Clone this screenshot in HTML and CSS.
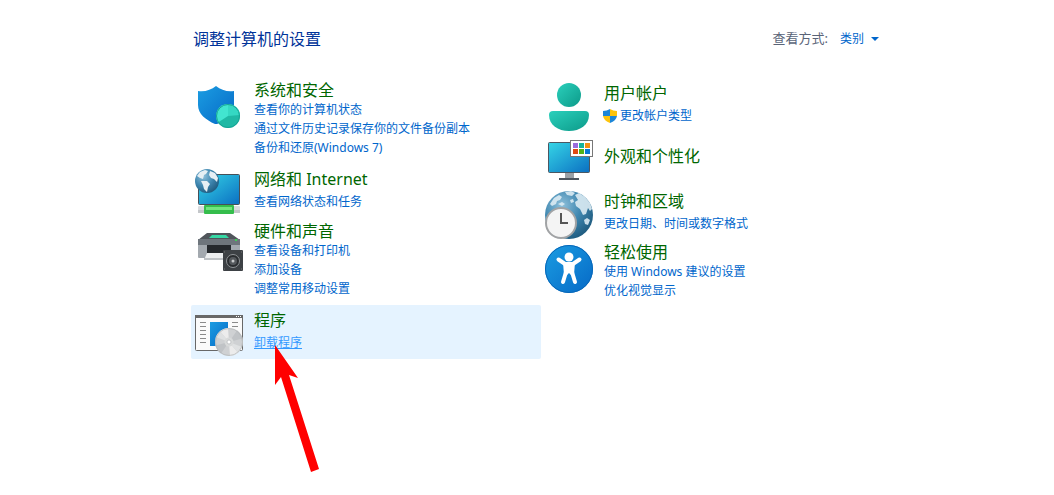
FILE: index.html
```html
<!DOCTYPE html>
<html lang="zh-CN">
<head>
    <meta charset="UTF-8">
    <meta name="viewport" content="width=device-width, initial-scale=1.0">
    <title>控制面板</title>
    <link rel="stylesheet" href="styles.css">
</head>
<body>
    <main class="panel">
        <header class="panel-header">
            <h1>调整计算机的设置</h1>
            <div class="view-by">
                <label for="view">查看方式:</label>
                <select id="view"><option>类别</option></select>
                <svg class="caret" viewBox="0 0 8 4"><path d="M0 0H8L4 4Z" fill="#0066cc"/></svg>
            </div>
        </header>

        <div class="columns">
            <div class="column column-left">
                <section class="category tall">
                    <svg class="icon" viewBox="0 0 48 48">
                        <defs>
                            <linearGradient id="blue" x1="0" y1="0" x2="1" y2="1"><stop offset="0" stop-color="#1b9de2"/><stop offset="1" stop-color="#0669c6"/></linearGradient>
                            <linearGradient id="screen" x1="0" y1="0" x2="1" y2="1"><stop offset="0" stop-color="#35d5e6"/><stop offset="1" stop-color="#0b6fc2"/></linearGradient>
                            <linearGradient id="teal" x1="0" y1="0" x2="1" y2="1"><stop offset="0" stop-color="#2bd0bc"/><stop offset="1" stop-color="#0c9a89"/></linearGradient>
                            <radialGradient id="globe" cx=".35" cy=".3" r=".8"><stop offset="0" stop-color="#8fc0da"/><stop offset=".5" stop-color="#3f87b0"/><stop offset="1" stop-color="#1b5578"/></radialGradient>
                        </defs>
                        <path d="M21 3C26 7 32 9 39 8V22C39 31 31 38 22 41H20C11 37 3 31 3 22V8C10 9 16 7 21 3Z" fill="url(#blue)"/>
                        <circle cx="33" cy="33" r="12" fill="#20b9a5"/>
                        <path d="M33 33L23 39.500A12 12 0 0 1 33 21Z" fill="#42e5d0"/>
                        <path d="M33 33V21A12 12 0 0 1 45 32Z" fill="#35d8c3"/>
                        <circle cx="33" cy="33" r="11.500" fill="none" stroke="#16a394"/>
                    </svg>
                    <div class="info">
                        <h2><a href="#">系统和安全</a></h2>
                        <a href="#">查看你的计算机状态</a>
                        <a href="#">通过文件历史记录保存你的文件备份副本</a>
                        <a href="#">备份和还原(Windows 7)</a>
                    </div>
                </section>

                <section class="category">
                    <svg class="icon" viewBox="0 0 48 48">
                        <rect x="3.500" y="7.500" width="41" height="30" rx="1" fill="url(#screen)" stroke="#465058"/>
                        <rect x="3" y="39" width="42" height="7" rx="1" fill="#d9dbde"/>
                        <path d="M3 43H45V46H3Z" fill="#c4c7ca"/>
                        <rect x="9" y="38" width="30" height="9" rx="1" fill="#35bd4c"/>
                        <path d="M11 40H37V43H11Z" fill="#72e580"/>
                        <circle cx="12" cy="14" r="12" fill="url(#globe)"/>
                        <path d="M2 9L5 5 10 3 13 4 11 7 9 8 8 12 5 11ZM6 14L12 14 15 17 13 20 12 25 9 22 8 18ZM15 4L20 6 23 11 22 15 19 12 16 11 14 8Z" fill="#e6eff4"/>
                    </svg>
                    <div class="info">
                        <h2><a href="#">网络和 Internet</a></h2>
                        <a href="#">查看网络状态和任务</a>
                    </div>
                </section>

                <section class="category tall">
                    <svg class="icon" viewBox="0 0 48 48">
                        <path d="M12 9H35L45 16V19H3V16Z" fill="#50555b"/>
                        <path d="M17 11H31L34 14H14Z" fill="#36d8a4"/>
                        <rect x="3" y="15" width="42" height="19" rx="1" fill="#a3a9af"/>
                        <rect x="3" y="15" width="42" height="6" fill="#6e757c"/>
                        <circle cx="41" cy="16" r="1" fill="#32f04b"/>
                        <path d="M12 21H36V29H12Z" fill="#25292d"/>
                        <path d="M12 29H36L34 36H9Z" fill="#eceeef"/>
                        <path d="M9 34H34V36H9Z" fill="#bfc3c6"/>
                        <rect x="28" y="26" width="20" height="21" rx="1" fill="#3d4145"/>
                        <circle cx="38" cy="37" r="6.500" fill="#2a2d30" stroke="#8f9396"/>
                        <circle cx="38" cy="37" r="4" fill="#55595d"/>
                        <circle cx="38" cy="37" r="1.500" fill="#c8cacb"/>
                        <path d="M29 28H30M46 28H47M29 45H30M46 45H47" stroke="#777"/>
                    </svg>
                    <div class="info">
                        <h2><a href="#">硬件和声音</a></h2>
                        <a href="#">查看设备和打印机</a>
                        <a href="#">添加设备</a>
                        <a href="#">调整常用移动设置</a>
                    </div>
                </section>

                <section class="category selected">
                    <svg class="icon" viewBox="0 0 48 48">
                        <rect x=".500" y="7.500" width="47" height="35" rx="1" fill="#fafafa" stroke="#686868"/>
                        <path d="M0 7H48V10H0Z" fill="#686868"/>
                        <path d="M41 8.500H42M43 8.500H44M45 8.500H46" stroke="#fff"/>
                        <path d="M5 14.500H11M5 18.500H11M5 22.500H11M5 26.500H11M5 30.500H11M5 34.500H11M37 14.500H43M37 18.500H43" stroke="#8a8a8a"/>
                        <rect x="15" y="14" width="18" height="24" fill="url(#blue)"/>
                        <circle cx="34" cy="34" r="14" fill="#cfd1d3"/>
                        <path d="M34 34L25 23.300A14 14 0 0 1 33 20ZM34 34L43 44.700A14 14 0 0 1 35 48Z" fill="#ececec"/>
                        <path d="M34 34L21 29A14 14 0 0 1 25 23.300ZM34 34L47 39A14 14 0 0 1 43 44.700Z" fill="#dfe1e2"/>
                        <path d="M34 34L42 22.500A14 14 0 0 1 47.500 30.500ZM34 34L26 45.500A14 14 0 0 1 20.500 37.500Z" fill="#c0c3c6"/>
                        <circle cx="34" cy="34" r="13.500" fill="none" stroke="#b4b7b9" stroke-width=".700"/>
                        <circle cx="34" cy="34" r="4.500" fill="#d8dada"/>
                        <circle cx="34" cy="34" r="2" fill="#fff" stroke="#b5b8ba" stroke-width=".700"/>
                    </svg>
                    <div class="info">
                        <h2><a href="#">程序</a></h2>
                        <a class="hovered" href="#">卸载程序</a>
                    </div>
                    <svg class="pointer" viewBox="0 0 44 127"><path d="M0 0L23 33 14 30 44 124 36 127 6 32 0 40Z" fill="#ff0000"/></svg>
                </section>
            </div>

            <div class="column">
                <section class="category">
                    <svg class="icon" viewBox="0 0 48 48">
                        <circle cx="24" cy="12" r="12" fill="url(#teal)"/>
                        <path d="M8 28H40Q44 28 44 32C44 42 35 48 24 48S4 42 4 32Q4 28 8 28Z" fill="url(#teal)"/>
                    </svg>
                    <div class="info">
                        <h2><a href="#">用户帐户</a></h2>
                        <a class="with-shield" href="#"><svg class="shield" viewBox="0 0 14 14"><path d="M7 0Q10 2 14 2V7H7Z" fill="#fdc40c"/><path d="M7 0Q4 2 0 2V7H7Z" fill="#1c86d8"/><path d="M0 7Q1 12 7 14V7Z" fill="#fdc40c"/><path d="M14 7Q13 12 7 14V7Z" fill="#1c86d8"/></svg>更改帐户类型</a>
                    </div>
                </section>

                <section class="category single">
                    <svg class="icon" viewBox="0 0 48 48">
                        <rect x="20" y="36" width="9" height="6" fill="#9aa1a7"/>
                        <rect x="14" y="41" width="20" height="2" fill="#4c555e"/>
                        <rect x="3.500" y="5.500" width="41" height="30" rx="1" fill="url(#screen)" stroke="#4b5762"/>
                        <rect x="25.500" y="3.500" width="22" height="16" fill="#fff" stroke="#777"/>
                        <path d="M28 6H33V11H28Z" fill="#9a6bdb"/><path d="M34 6H39V11H34Z" fill="#18b39b"/><path d="M40 6H45V11H40Z" fill="#f59012"/>
                        <path d="M28 12H33V17H28Z" fill="#e04a13"/><path d="M34 12H39V17H34Z" fill="#51b318"/><path d="M40 12H45V17H40Z" fill="#0878d4"/>
                    </svg>
                    <div class="info">
                        <h2><a href="#">外观和个性化</a></h2>
                    </div>
                </section>

                <section class="category">
                    <svg class="icon" viewBox="0 0 48 48">
                        <circle cx="24" cy="24" r="24" fill="url(#globe)"/>
                        <path d="M5 13L9 7 14 4 17 6 15 9 12 10 11 13 7 15ZM13 13L17 11 20 13 17 15ZM20 1L26 0 30 2 27 5 22 4ZM30 4L34 2 40 6 45 12 47 18 45 20 43 17 41 23 38 24 35 18 31 15 30 11 33 9ZM25 9L28 8 29 11 26 12ZM39 29L42 27 45 29 43 34 40 33Z" fill="#dcebf3" opacity=".9"/>
                        <circle cx="16" cy="32" r="15" fill="#f4f4f4" stroke="#a1a3a5" stroke-width="2"/>
                        <path d="M16 22V32H23" fill="none" stroke="#555" stroke-width="2"/>
                    </svg>
                    <div class="info">
                        <h2><a href="#">时钟和区域</a></h2>
                        <a href="#">更改日期、时间或数字格式</a>
                    </div>
                </section>

                <section class="category tall">
                    <svg class="icon" viewBox="0 0 48 48">
                        <circle cx="24" cy="24" r="24" fill="url(#blue)"/>
                        <circle cx="24" cy="24" r="23.500" fill="none" stroke="#0867b8"/>
                        <circle cx="24" cy="12" r="4.500" fill="#fff"/>
                        <path d="M13.500 14.500L20 19H28L34.500 14.500M18 37L21 27M30 37L27 27" fill="none" stroke="#fff" stroke-width="4" stroke-linecap="round"/>
                        <path d="M18 17H30L29 30H26L24 28 22 30H19Z" fill="#fff"/>
                    </svg>
                    <div class="info">
                        <h2><a href="#">轻松使用</a></h2>
                        <a href="#">使用 Windows 建议的设置</a>
                        <a href="#">优化视觉显示</a>
                    </div>
                </section>
            </div>
        </div>
    </main>
</body>
</html>
```

FILE: styles.css
```css
* { box-sizing: border-box; }
body { margin: 0; background: #fff; color: #0066cc; font-family: "Noto Sans", "Noto Sans CJK SC", sans-serif; font-size: 12px; line-height: 19px; }
a { color: #0066cc; text-decoration: none; }
a:hover, .hovered { color: #3399ff; text-decoration: underline; }
h1, h2 { margin: 0; font-size: 16px; font-weight: 400; }
h1 { color: #003399; line-height: 20px; }
h2 { line-height: 20px; }
h2 a { color: #006600; }

.panel { min-height: 100vh; padding: 29px 163px 24px 191px; }
.panel-header { display: flex; justify-content: space-between; align-items: flex-start; padding: 0 12px 0 2px; margin-bottom: 31px; }
.view-by { display: flex; align-items: center; }
.view-by label { color: #5a6478; font-size: 13px; margin-right: 12px; }
.view-by select { appearance: none; border: none; padding: 0; background: none; color: #0066cc; font: inherit; cursor: pointer; }
.caret { width: 8px; height: 4px; margin-left: 6px; }

.columns { display: grid; grid-template-columns: 1fr 1fr; }
.column { display: flex; flex-direction: column; }
.column-left { gap: 3px; }
.category { position: relative; display: flex; align-items: flex-start; gap: 11px; min-height: 54px; padding: 3px 4px; border-radius: 2px; }
.category.tall { padding: 0 4px 4px; }
.tall .icon { margin-top: 3px; }
.category.selected { background: #e5f3ff; }
.icon { flex: none; width: 48px; height: 48px; }
.info { display: flex; flex-direction: column; align-items: flex-start; white-space: nowrap; }
.category:not(.tall) h2 { margin-bottom: 3px; }
.column-left .category:not(.tall) { padding: 5px 4px 1px; }
.column-left .category:not(.tall) .icon { margin-top: -2px; }
.single { align-items: center; }
.single .info { padding-bottom: 8px; }
.with-shield { display: flex; align-items: center; gap: 3px; margin-left: -1px; }
.shield { width: 14px; height: 14px; }

/* red arrow over the uninstall link */
.pointer { position: absolute; left: 84px; top: 40px; width: 44px; height: 127px; pointer-events: none; }
```
